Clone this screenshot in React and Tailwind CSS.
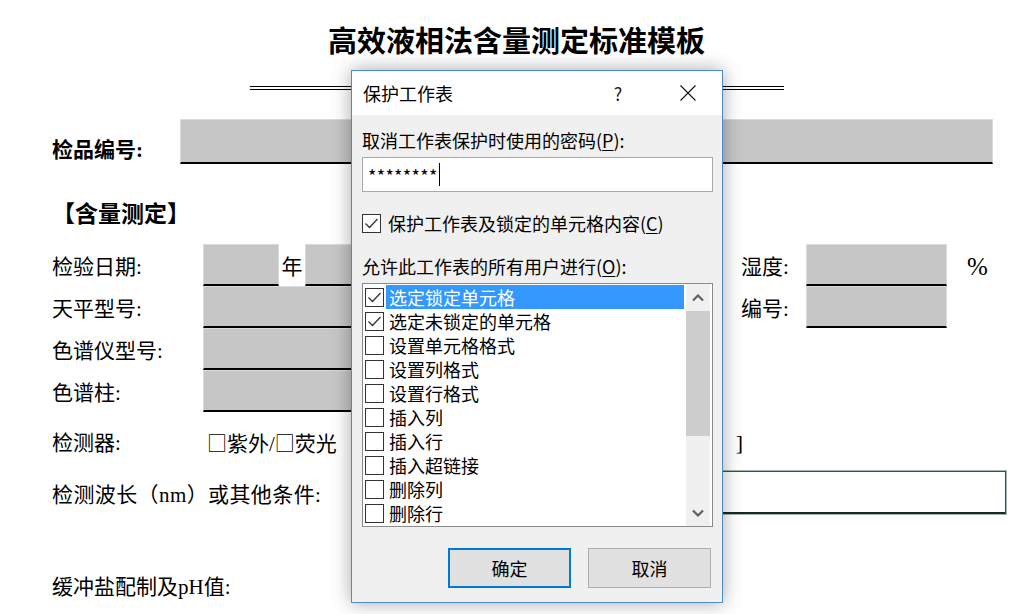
import React from 'react';

const sheetFont = "font-['Liberation_Serif','Noto_Sans_CJK_SC',serif]";
const uiFont = "font-['Noto_Sans_CJK_SC','Microsoft_YaHei',sans-serif]";

const permissions = [
    { label: '选定锁定单元格', checked: true, selected: true },
    { label: '选定未锁定的单元格', checked: true },
    { label: '设置单元格格式' },
    { label: '设置列格式' },
    { label: '设置行格式' },
    { label: '插入列' },
    { label: '插入行' },
    { label: '插入超链接' },
    { label: '删除列' },
    { label: '删除行' },
];

// gray input cell of the worksheet, black rule underneath
const Cell = ({ className = '' }) => (
    <div className={`h-[42px] shrink-0 border border-[#dadada] border-b-2 border-b-black bg-[#c6c6c6] ${className}`} />
);

const CheckBox = ({ checked }) => (
    <span className="flex h-[19px] w-[19px] shrink-0 items-center justify-center border border-[#333333] bg-white">
        {checked && (
            <svg width="15" height="15" viewBox="0 0 15 15">
                <path d="M1.5 7.5 L5.5 11.5 L13.5 3" fill="none" stroke="#333333" strokeWidth="1.3" />
            </svg>
        )}
    </span>
);

const Chevron = ({ down }) => (
    <svg width="12" height="8" viewBox="0 0 12 8">
        <path d={down ? 'M1 1.5 L6 6.5 L11 1.5' : 'M1 6.5 L6 1.5 L11 6.5'} fill="none" stroke="#606060" strokeWidth="2.2" />
    </svg>
);

const Label = ({ children, className = '' }) => (
    <div className={`shrink-0 pt-[4px] text-[21px] leading-[26px] ${className}`}>{children}</div>
);

const Square = () => <span className="font-['Noto_Sans_CJK_SC'] text-[20px]">□</span>;

const Sheet = () => (
    <div className={`${sheetFont} text-black`}>
        <h1 className="pt-[26px] text-center text-[29px] font-bold leading-[32px]">
            高效液相法含量测定标准模板
        </h1>
        <div className="mx-auto mt-[28px] h-[4px] w-[534px] border-y border-black" />

        <div className="mt-[29px] flex items-end pl-[52px]">
            <div className="w-[128px] shrink-0 pb-[1px] text-[21px] font-bold leading-[26px]">检品编号:</div>
            <div className="h-[45px] w-[813px] border border-[#dadada] border-b-2 border-b-black bg-[#c6c6c6]" />
        </div>

        <div className="mt-[36px] pl-[52px] text-[23px] font-bold leading-[30px]">【含量测定】</div>

        <div className="mt-[14px] pl-[52px]">
            <div className="flex h-[42px] items-center">
                <Label className="w-[151px]">检验日期:</Label>
                <div className="flex w-[538px] shrink-0">
                    <Cell className="w-[76px]" />
                    <div className="w-[26px] pt-[4px] text-center text-[21px] leading-[38px]">年</div>
                    <Cell className="w-[120px]" />
                </div>
                <Label className="w-[65px]">湿度:</Label>
                <Cell className="w-[141px]" />
                <Label className="ml-[20px] text-[25px]">%</Label>
            </div>
            <div className="flex h-[42px] items-center">
                <Label className="w-[151px]">天平型号:</Label>
                <div className="w-[538px] shrink-0">
                    <Cell className="w-[300px]" />
                </div>
                <Label className="w-[65px]">编号:</Label>
                <Cell className="w-[141px]" />
            </div>
            <div className="flex h-[42px] items-center">
                <Label className="w-[151px]">色谱仪型号:</Label>
                <Cell className="w-[300px]" />
            </div>
            <div className="flex h-[42px] items-center">
                <Label className="w-[151px]">色谱柱:</Label>
                <Cell className="w-[300px]" />
            </div>
            <div className="flex h-[58px] items-center">
                <Label className="w-[151px]">检测器:</Label>
                <div className="flex w-[540px] shrink-0 items-center justify-between pl-[4px]">
                    <Label>
                        <Square />紫外/<Square />荧光
                    </Label>
                    <Label className="text-[22px]">]</Label>
                </div>
            </div>
            <div className="flex h-[45px] items-center pr-[26px]">
                <Label className="tracking-[0.4px]">检测波长（nm）或其他条件:</Label>
                <div className="ml-auto h-[45px] w-[640px] border border-[#9fb5aa] bg-white">
                    <div className="h-full border border-[#2f5a48] border-b-2 border-b-[#1a2a22]" />
                </div>
            </div>
            <Label className="mt-[55px]">缓冲盐配制及pH值:</Label>
        </div>
    </div>
);

const ProtectDialog = () => (
    <div className={`${uiFont} absolute left-[351px] top-[70px] flex h-[533px] w-[372px] flex-col border border-[#4a8ccc] bg-[#f0f0f0] text-[18px] text-black shadow-[0_0_18px_rgba(0,0,0,0.35)]`}>
        <div className="flex h-[44px] shrink-0 items-center bg-white pl-[11px] pr-[26px]">
            <span className="flex-1 leading-[24px]">保护工作表</span>
            <span className="w-[20px] text-center leading-[24px] text-[#222]">?</span>
            <span className="w-[52px]" />
            <svg width="16" height="16" viewBox="0 0 16 16">
                <path d="M0.5 0.5 L15.5 15.5 M15.5 0.5 L0.5 15.5" stroke="#111" strokeWidth="1.1" />
            </svg>
        </div>

        <div className="flex flex-1 flex-col pl-[10px] pr-[9px]">
            <div className="mt-[13px] leading-[24px]">
                取消工作表保护时使用的密码(<span className="underline underline-offset-2">P</span>):
            </div>
            <div className="mt-[5px] flex h-[35px] items-center border border-[#a9a9a9] bg-white pl-[5px]">
                <span className="leading-[24px] tracking-[0.3px]">********</span>
                <span className="ml-[1px] h-[23px] w-px bg-black" />
            </div>

            <label className="mt-[19px] flex h-[24px] items-center gap-[7px]">
                <CheckBox checked />
                <span className="leading-[24px]">
                    保护工作表及锁定的单元格内容(<span className="underline underline-offset-2">C</span>)
                </span>
            </label>

            <div className="mt-[19px] leading-[24px]">
                允许此工作表的所有用户进行(<span className="underline underline-offset-2">O</span>):
            </div>

            <div className="mt-[5px] flex h-[244px] border border-[#8a8a8a] bg-white">
                <div className="flex-1 pl-[2px] pt-[1px]">
                    {permissions.map((p) => (
                        <div key={p.label} className="flex h-[24px] items-center">
                            <CheckBox checked={p.checked} />
                            <span className={`ml-[2px] mr-[2px] flex h-[24px] flex-1 items-center pl-[3px] leading-[24px] ${p.selected ? 'bg-[#3399ff] text-white' : ''}`}>
                                {p.label}
                            </span>
                        </div>
                    ))}
                </div>
                <div className="mr-[2px] flex w-[24px] flex-col bg-[#f0f0f0]">
                    <div className="flex h-[27px] items-center justify-center">
                        <Chevron />
                    </div>
                    <div className="h-[125px] bg-[#cdcdcd]" />
                    <div className="mt-auto flex h-[27px] items-center justify-center">
                        <Chevron down />
                    </div>
                </div>
            </div>

            <div className="mr-[2px] mt-[21px] flex justify-end gap-[17px]">
                <button className="h-[40px] w-[123px] border-2 border-[#0078d7] bg-[#e1e1e1] leading-[24px]">确定</button>
                <button className="h-[40px] w-[123px] border border-[#adadad] bg-[#e1e1e1] leading-[24px]">取消</button>
            </div>
        </div>
    </div>
);

const App = () => {
    return (
        <div className="relative h-[614px] w-[1033px] overflow-hidden bg-white">
            <Sheet />
            <ProtectDialog />
        </div>
    );
};

export default App;
